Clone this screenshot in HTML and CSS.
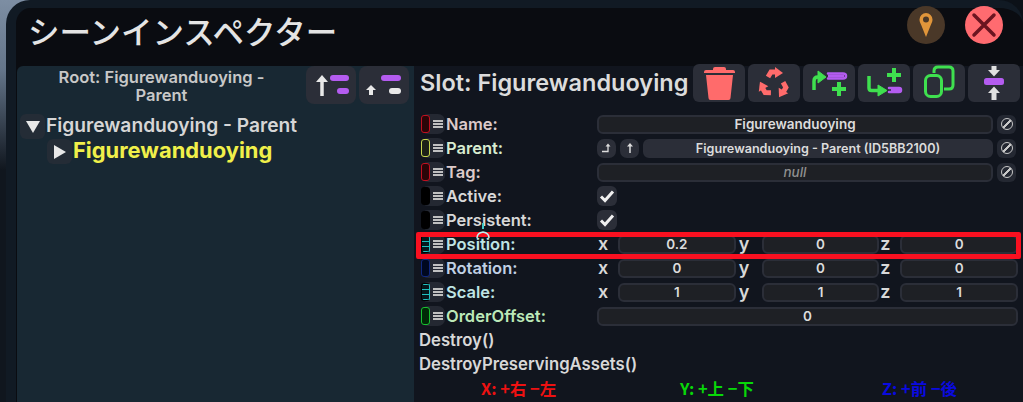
FILE: index.html
```html
<!DOCTYPE html>
<html lang="ja">
<head>
    <meta charset="UTF-8">
    <title>シーンインスペクター</title>
    <link rel="stylesheet" href="styles.css">
</head>
<body>
    <div class="window">
        <header class="title-bar">
            <h1>シーンインスペクター</h1>
            <div class="title-buttons">
                <span class="round-btn pin">
                    <svg width="16" height="26" viewBox="0 0 16 26"><path d="M8 1a6.500 6.500 0 0 0-6.500 6.500c0 2 .8 3.400 1.700 5.500L8 25l4.800-12c.9-2.100 1.700-3.500 1.700-5.500A6.500 6.500 0 0 0 8 1z" fill="#e0953a"/><circle cx="8" cy="7.500" r="3" fill="#4a3828"/></svg>
                </span>
                <span class="round-btn close">
                    <svg width="26" height="26" viewBox="0 0 26 26"><path d="M3 3l20 20M23 3L3 23" stroke="#6b1420" stroke-width="3.500" stroke-linecap="round"/></svg>
                </span>
            </div>
        </header>
        <div class="panels">
            <section class="tree-panel">
                <div class="tree-head">
                    <div class="root-name">Root: Figurewanduoying - Parent</div>
                    <span class="tool-btn tree-btn">
                        <svg width="36" height="26" viewBox="0 0 36 26"><path d="M9 24V8" stroke="#e8e8e8" stroke-width="3.500"/><path d="M3 10l6-7 6 7z" fill="#e8e8e8"/><rect x="17" y="3" width="19" height="6" rx="3" fill="#b45cf0"/><rect x="24" y="16" width="12" height="6" rx="3" fill="#b45cf0"/></svg>
                    </span>
                    <span class="tool-btn tree-btn">
                        <svg width="36" height="26" viewBox="0 0 36 26"><path d="M5 23v-5" stroke="#e8e8e8" stroke-width="4"/><path d="M0 18l5-5 5 5z" fill="#e8e8e8"/><rect x="15" y="3" width="20" height="6" rx="3" fill="#b45cf0"/><rect x="23" y="16" width="12" height="6" rx="3" fill="#e8e8e8"/></svg>
                    </span>
                </div>
                <div class="tree-row">
                    <span class="expander"><svg width="14" height="12" viewBox="0 0 14 12"><path d="M0 0h14L7 12z" fill="#e8e8e8"/></svg></span>
                    <span class="tree-label">Figurewanduoying - Parent</span>
                </div>
                <div class="tree-row nested">
                    <span class="expander"><svg width="12" height="14" viewBox="0 0 12 14"><path d="M0 0l12 7-12 7z" fill="#e8e8e8"/></svg></span>
                    <span class="tree-label selected">Figurewanduoying</span>
                </div>
            </section>

            <section class="slot-panel">
                <div class="slot-head">
                    <h2>Slot: Figurewanduoying</h2>
                    <div class="slot-tools">
                        <span class="tool-btn">
                            <svg width="52" height="38" viewBox="0 0 52 38"><path d="M20 5q0-2 2-2h9q2 0 2 2v1h7q2 0 2 2v1H11V8q0-2 2-2h7z" fill="#ff6b6b"/><path d="M13 11h27l-2.500 23q0 2-2 2H17.500q-2 0-2-2z" fill="#ff6b6b"/></svg>
                        </span>
                        <span class="tool-btn">
                            <svg width="52" height="38" viewBox="0 0 52 38">
                                <g fill="#ff6b6b">
                                    <g><path d="M20 13l3-5h5" fill="none" stroke="#ff6b6b" stroke-width="5"/><path d="M27 3l8 6-8 5z"/></g>
                                    <g transform="rotate(120 26 20)"><path d="M20 13l3-5h5" fill="none" stroke="#ff6b6b" stroke-width="5"/><path d="M27 3l8 6-8 5z"/></g>
                                    <g transform="rotate(240 26 20)"><path d="M20 13l3-5h5" fill="none" stroke="#ff6b6b" stroke-width="5"/><path d="M27 3l8 6-8 5z"/></g>
                                </g>
                            </svg>
                        </span>
                        <span class="tool-btn">
                            <svg width="52" height="38" viewBox="0 0 52 38"><path d="M11 26V17q0-4 4-4h2" fill="none" stroke="#3fe04f" stroke-width="3.500"/><path d="M15 7l8 6-8 6z" fill="#3fe04f" stroke="#3fe04f" stroke-linejoin="round"/><path d="M25 9.500h15q3 0 3 2.500t-3 2.500H25" fill="none" stroke="#b45cf0" stroke-width="2.500" stroke-linecap="round"/><path d="M25 12h16" stroke="#b45cf0" stroke-width="3"/><path d="M36 18v14M29 25h14" stroke="#3fe04f" stroke-width="4"/></svg>
                        </span>
                        <span class="tool-btn">
                            <svg width="52" height="38" viewBox="0 0 52 38"><path d="M11 12v12q0 2.500 2.500 2.500H22" fill="none" stroke="#3fe04f" stroke-width="3.500"/><path d="M20 21l9 5.500-9 5.500z" fill="#3fe04f" stroke="#3fe04f" stroke-linejoin="round"/><path d="M36 4v14M29 11h14" stroke="#3fe04f" stroke-width="4"/><path d="M31 24h10q2 0 2 2t-2 2H31" fill="none" stroke="#b45cf0" stroke-width="2.500" stroke-linecap="round"/><path d="M33 26h9" stroke="#b45cf0" stroke-width="2.500"/></svg>
                        </span>
                        <span class="tool-btn">
                            <svg width="52" height="38" viewBox="0 0 52 38"><rect x="12.500" y="11.500" width="16" height="21" rx="5" fill="none" stroke="#3fe04f" stroke-width="3"/><path d="M21 9V7q0-4 4-4h11q4 0 4 4v14q0 4-4 4h-5" fill="none" stroke="#3fe04f" stroke-width="3"/></svg>
                        </span>
                        <span class="tool-btn">
                            <svg width="52" height="38" viewBox="0 0 52 38"><path d="M26 2v6M26 29v7" stroke="#e0e0e0" stroke-width="5"/><path d="M20 6h12l-6 6.500z" fill="#e0e0e0"/><rect x="16" y="14" width="20" height="7" rx="2.500" fill="#b45cf0"/><path d="M20 29h12l-6-6.500z" fill="#e0e0e0"/></svg>
                        </span>
                    </div>
                </div>

                <div class="rows">
                    <div class="row">
                        <span class="handle"><i class="swatch red"></i><i class="bars"></i></span>
                        <span class="label name">Name:</span>
                        <div class="field">Figurewanduoying</div>
                        <span class="null-btn"><i></i></span>
                    </div>
                    <div class="row">
                        <span class="handle"><i class="swatch yellow"></i><i class="bars"></i></span>
                        <span class="label green">Parent:</span>
                        <span class="mini-btn">
                            <svg width="10" height="10" viewBox="0 0 10 10"><path d="M0 8.500h6V3" fill="none" stroke="#ddd" stroke-width="1.300"/><path d="M3.500 3.500L6 .5l2.500 3z" fill="#ddd"/></svg>
                        </span>
                        <span class="mini-btn">
                            <svg width="8" height="10" viewBox="0 0 8 10"><path d="M4 10V3" stroke="#ddd" stroke-width="1.500"/><path d="M1 3.500L4 0l3 3.500z" fill="#ddd"/></svg>
                        </span>
                        <div class="field ref">Figurewanduoying - Parent (ID5BB2100)</div>
                        <span class="null-btn"><i></i></span>
                    </div>
                    <div class="row">
                        <span class="handle"><i class="swatch red"></i><i class="bars"></i></span>
                        <span class="label name">Tag:</span>
                        <div class="field null-value">null</div>
                        <span class="null-btn"><i></i></span>
                    </div>
                    <div class="row">
                        <span class="handle"><i class="swatch black"></i><i class="bars"></i></span>
                        <span class="label">Active:</span>
                        <span class="check"><svg width="16" height="14" viewBox="0 0 16 14"><path d="M2 7.500l4 4 8-9" fill="none" stroke="#f0f0f0" stroke-width="3"/></svg></span>
                    </div>
                    <div class="row">
                        <span class="handle"><i class="swatch black"></i><i class="bars"></i></span>
                        <span class="label">Persistent:</span>
                        <span class="check"><svg width="16" height="14" viewBox="0 0 16 14"><path d="M2 7.500l4 4 8-9" fill="none" stroke="#f0f0f0" stroke-width="3"/></svg></span>
                    </div>
                    <div class="row">
                        <span class="handle"><i class="swatch teal"></i><i class="bars"></i></span>
                        <span class="label cyan">Position:</span>
                        <div class="vector">
                            <span class="axis">x</span><div class="field">0.2</div>
                            <span class="axis wide">y</span><div class="field">0</div>
                            <span class="axis">z</span><div class="field">0</div>
                        </div>
                    </div>
                    <div class="row">
                        <span class="handle"><i class="swatch navy"></i><i class="bars"></i></span>
                        <span class="label blue">Rotation:</span>
                        <div class="vector">
                            <span class="axis">x</span><div class="field">0</div>
                            <span class="axis wide">y</span><div class="field">0</div>
                            <span class="axis">z</span><div class="field">0</div>
                        </div>
                    </div>
                    <div class="row">
                        <span class="handle"><i class="swatch teal"></i><i class="bars"></i></span>
                        <span class="label cyan">Scale:</span>
                        <div class="vector">
                            <span class="axis">x</span><div class="field">1</div>
                            <span class="axis wide">y</span><div class="field">1</div>
                            <span class="axis">z</span><div class="field">1</div>
                        </div>
                    </div>
                    <div class="row">
                        <span class="handle"><i class="swatch lime"></i><i class="bars"></i></span>
                        <span class="label lightgreen">OrderOffset:</span>
                        <div class="field">0</div>
                    </div>
                    <div class="row method">Destroy()</div>
                    <div class="row method">DestroyPreservingAssets()</div>
                    <div class="row legend">
                        <span class="legend-x">X: +右 −左</span>
                        <span class="legend-y">Y: +上 −下</span>
                        <span class="legend-z">Z: +前 −後</span>
                    </div>
                </div>
                <div class="highlight"></div>
                <svg class="cursor" width="16" height="18" viewBox="0 0 16 18"><path d="M8 0v6" stroke="#3fc8c8" stroke-width="2"/><path d="M2 15q0-5 6-6 6 1 6 6" fill="none" stroke="#bfeeee" stroke-width="1.500"/></svg>
            </section>
        </div>
    </div>
</body>
</html>
```

FILE: styles.css
```css
* {
    box-sizing: border-box;
}
body {
    margin: 0;
    width: 1023px;
    height: 402px;
    overflow: hidden;
    background:
        linear-gradient(90deg, transparent 40px, #0c1118 40px),
        linear-gradient(180deg, #7d8ea3 0, #64758a 70px, #10161e 170px);
    font-family: "Inter", "Noto Sans CJK JP", sans-serif;
    color: #e2e2e2;
}
.window {
    margin-left: 6px;
    height: 402px;
    background: #0a0c11;
    border: solid #111a24;
    border-width: 8px 0 0 10px;
    border-radius: 24px 24px 0 0;
    display: flex;
    flex-direction: column;
}
.title-bar {
    height: 58px;
    flex: none;
    display: flex;
    justify-content: space-between;
    align-items: flex-start;
}
h1 {
    margin: 3px 0 0 12px;
    font-family: "Noto Sans CJK JP", sans-serif;
    font-size: 31.5px;
    line-height: 38px;
    font-weight: 500;
    color: #e4e4e4;
}
.title-buttons {
    display: flex;
    gap: 20px;
    margin: -2px 20px 0 0;
}
.round-btn {
    width: 38px;
    height: 38px;
    border-radius: 50%;
    display: flex;
    align-items: center;
    justify-content: center;
}
.pin {
    background: #4a3828;
}
.close {
    background: #ff6b70;
}
.panels {
    flex: 1;
    display: flex;
    min-height: 0;
}
.tree-panel {
    width: 397px;
    flex: none;
    margin-left: 1px;
    background: #182833;
    border-radius: 6px 0 0 0;
    padding-left: 3px;
}
.tree-head {
    display: flex;
    height: 45px;
    gap: 3px;
    align-items: flex-start;
    margin-bottom: 3px;
}
.root-name {
    width: 283px;
    flex: none;
    text-align: center;
    font-size: 16.5px;
    line-height: 18px;
    font-weight: 600;
    color: #c8c8c8;
    padding: 2px 30px 0;
}
.tool-btn {
    width: 52px;
    height: 38px;
    flex: none;
    background: #2b2e38;
    border-radius: 6px;
    display: flex;
    align-items: center;
    justify-content: center;
}
.tree-btn {
    width: 50px;
    border-radius: 8px;
}
.tree-row {
    display: flex;
    align-items: center;
    height: 25px;
    font-size: 19.2px;
    font-weight: 600;
    color: #d6d6d6;
}
.tree-label {
    padding-bottom: 4px;
}
.nested {
    margin-left: 27px;
}
.expander {
    width: 25px;
    height: 25px;
    border-radius: 6px;
    background: #242c36;
    display: flex;
    align-items: center;
    justify-content: center;
    margin-right: 1px;
}
.selected {
    font-size: 21.9px;
    font-weight: 700;
    color: #f0f04a;
}
.slot-panel {
    flex: 1;
    min-width: 0;
    background: #11151e;
    position: relative;
    padding: 0 5px;
}
.slot-head {
    display: flex;
    align-items: flex-start;
    height: 48px;
    margin-top: -2px;
}
h2 {
    margin: 0;
    width: 274px;
    flex: none;
    padding-left: 1px;
    font-size: 23.5px;
    line-height: 38px;
    font-weight: 600;
    color: #dcdcdc;
    white-space: nowrap;
}
.slot-tools {
    display: flex;
    gap: 3px;
}
.row {
    height: 24px;
    display: flex;
    align-items: center;
    gap: 4px;
    font-size: 16.5px;
    font-weight: 600;
}
.handle {
    width: 24px;
    height: 20px;
    flex: none;
    margin-left: 2px;
    display: flex;
    align-items: center;
    gap: 3px;
    background: #242832;
    border-radius: 7px;
}
.swatch {
    width: 9px;
    height: 18px;
    border: 1px solid;
    border-radius: 3px;
    background: #000;
}
.red { border-color: #c01020; background: #2a0508; }
.yellow { border-color: #c8d850; background: #1d2218; }
.black { border-color: #000; }
.teal {
    border-color: #000 #1fc0c0 #000 #000;
    background: repeating-linear-gradient(#1fc0c0 0 1px, #06181c 1px 5px);
}
.navy { border-color: #102880; background: #000820; }
.lime { border-color: #18c030; background: #002806; }
.bars {
    width: 10px;
    height: 8px;
    background: repeating-linear-gradient(#c0c0c0 0 2px, transparent 2px 3px);
}
.label {
    width: 147px;
    flex: none;
    margin-left: -3px;
    color: #d8d8d8;
    white-space: nowrap;
}
.label.name { color: #dccaca; }
.label.green { color: #d8ecd0; }
.label.cyan { color: #bfe4e4; }
.label.blue { color: #c0d0e4; }
.label.lightgreen { color: #bce8b8; }
.field {
    flex: 1;
    min-width: 0;
    height: 19px;
    background: #1e2025;
    border: 2px solid #2b2e38;
    border-radius: 6px;
    font-size: 13.5px;
    line-height: 15px;
    font-weight: 600;
    text-align: center;
    color: #dcdcdc;
    white-space: nowrap;
}
.field.ref {
    background: #2b2e38;
    font-size: 12.6px;
}
.null-value {
    font-style: italic;
    font-weight: 500;
    color: #8f8f8f;
}
.null-btn {
    width: 19px;
    height: 19px;
    flex: none;
    margin-right: 2px;
    background: #242832;
    border-radius: 6px;
    display: flex;
    align-items: center;
    justify-content: center;
}
.null-btn i {
    width: 12px;
    height: 12px;
    border: 1.500px solid #c8c8c8;
    border-radius: 50%;
    background: linear-gradient(135deg, transparent 42%, #c8c8c8 42% 58%, transparent 58%);
}
.mini-btn {
    width: 19px;
    height: 19px;
    flex: none;
    background: #2b2e38;
    border-radius: 7px;
    display: flex;
    align-items: center;
    justify-content: center;
}
.check {
    width: 20px;
    height: 20px;
    background: #2b2e38;
    border-radius: 6px;
    display: flex;
    align-items: center;
    justify-content: center;
}
.vector {
    flex: 1;
    display: flex;
    align-items: center;
}
.axis {
    width: 21px;
    flex: none;
    padding-left: 1px;
    font-size: 18px;
    line-height: 20px;
    color: #d8d8d8;
}
.axis.wide {
    width: 26px;
    padding-left: 3px;
}
.method {
    padding-left: 0;
    font-size: 16.7px;
    color: #d8d8d8;
}
.legend {
    font-family: "Noto Sans CJK JP", sans-serif;
    font-weight: 700;
    font-size: 16.4px;
    gap: 0;
}
.legend-x {
    width: 199px;
    color: #ee1111;
    margin-left: 62px;
}
.legend-y {
    width: 202px;
    color: #08d808;
}
.legend-z {
    color: #0a0ae0;
}
.highlight {
    position: absolute;
    left: 2px;
    top: 166px;
    width: 605px;
    height: 27px;
    border: 5px solid #fa1020;
    border-radius: 2px;
    pointer-events: none;
}
.cursor {
    position: absolute;
    left: 61px;
    top: 157px;
}
```
